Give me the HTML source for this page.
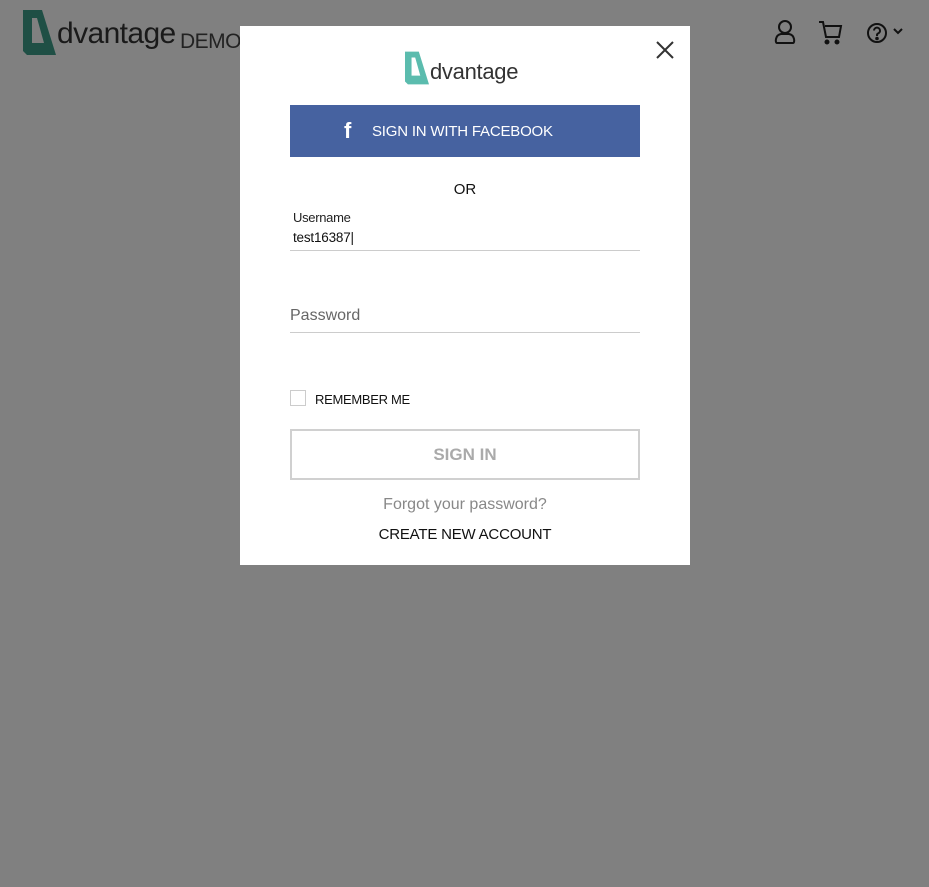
<!DOCTYPE html>
<html><head><style>
body{margin:0;width:929px;height:887px;background:#808080;font-family:"Liberation Sans",sans-serif;position:relative;overflow:hidden}
.a{position:absolute}
</style></head><body>
<svg class="a" style="left:23px;top:10px" width="33" height="45" viewBox="0 0 33 45"><path fill-rule="evenodd" d="M0 0H19L33 45H4L0 41ZM9 8V33H21L14 8Z" fill="#1f4f45"/></svg>
<div class="a" style="left:57px;top:17px;font-size:30px;color:#1a1a1a;letter-spacing:-0.6px">dvantage</div>
<div class="a" style="left:180px;top:30px;font-size:21px;color:#222;letter-spacing:-0.5px">DEMO</div>
<svg class="a" style="left:772px;top:18px" width="28" height="28" viewBox="0 0 28 28" fill="none" stroke="#111" stroke-width="2"><circle cx="13" cy="9" r="6"/><path d="M5 25c-2 0-2-8 4-9h8c6 1 6 9 4 9z"/></svg>
<svg class="a" style="left:818px;top:20px" width="26" height="26" viewBox="0 0 26 26" fill="none" stroke="#111" stroke-width="2"><path d="M1 2h4l3 15h13l2-11H7"/><circle cx="9" cy="22" r="1.5" fill="#111"/><circle cx="19" cy="22" r="1.5" fill="#111"/></svg>
<svg class="a" style="left:866px;top:22px" width="42" height="22" viewBox="0 0 42 22" fill="none" stroke="#111" stroke-width="2"><circle cx="11" cy="11" r="9"/><path d="M8 8.5a3 3 0 1 1 4 3c-1 .5-1 1-1 2.5"/><circle cx="11" cy="16.5" r=".8" fill="#111"/><path d="M28 7l4 4 4-4"/></svg>
<div class="a" style="left:240px;top:26px;width:450px;height:539px;background:#fff">
<svg class="a" style="left:416px;top:15px" width="18" height="18" viewBox="0 0 18 18" stroke="#333" stroke-width="2"><path d="M1 1L17 17M17 1L1 17"/></svg>
<svg class="a" style="left:165px;top:25px" width="24" height="34" viewBox="0 0 33 45"><path fill-rule="evenodd" d="M0 0H19L33 45H4L0 41ZM9 8V33H21L14 8Z" fill="#5bbcae"/></svg>
<div class="a" style="left:190px;top:33px;font-size:22px;color:#333;letter-spacing:-0.3px">dvantage</div>
<div class="a" style="left:50px;top:79px;width:350px;height:52px;background:#4662a0;color:#fff;font-size:15px;line-height:52px">
<span class="a" style="left:54px;top:0;font-weight:bold;font-size:22px">f</span><span class="a" style="left:82px;top:1px;letter-spacing:-0.2px">SIGN IN WITH FACEBOOK</span></div>
<div class="a" style="left:0;width:450px;top:155px;text-align:center;font-size:15px;color:#111">OR</div>
<div class="a" style="left:53px;top:184px;font-size:13px;color:#222;letter-spacing:-0.3px">Username</div>
<div class="a" style="left:53px;top:204px;font-size:13.5px;color:#111;letter-spacing:-0.2px">test16387|</div>
<div class="a" style="left:50px;top:224px;width:350px;height:1px;background:#ccc"></div>
<div class="a" style="left:50px;top:281px;font-size:16px;color:#666">Password</div>
<div class="a" style="left:50px;top:306px;width:350px;height:1px;background:#ccc"></div>
<div class="a" style="left:50px;top:364px;width:14px;height:14px;border:1px solid #ccc"></div>
<div class="a" style="left:75px;top:366px;font-size:13px;color:#111;letter-spacing:-0.3px">REMEMBER ME</div>
<div class="a" style="left:50px;top:403px;width:346px;height:47px;border:2px solid #d0d0d0;text-align:center;line-height:48px;font-size:17px;font-weight:bold;color:#aaa">SIGN IN</div>
<div class="a" style="left:0;width:450px;top:470px;text-align:center;font-size:16px;color:#888">Forgot your password?</div>
<div class="a" style="left:0;width:450px;top:500px;text-align:center;font-size:15px;color:#111;letter-spacing:-0.2px">CREATE NEW ACCOUNT</div>
</div>
</body></html>
